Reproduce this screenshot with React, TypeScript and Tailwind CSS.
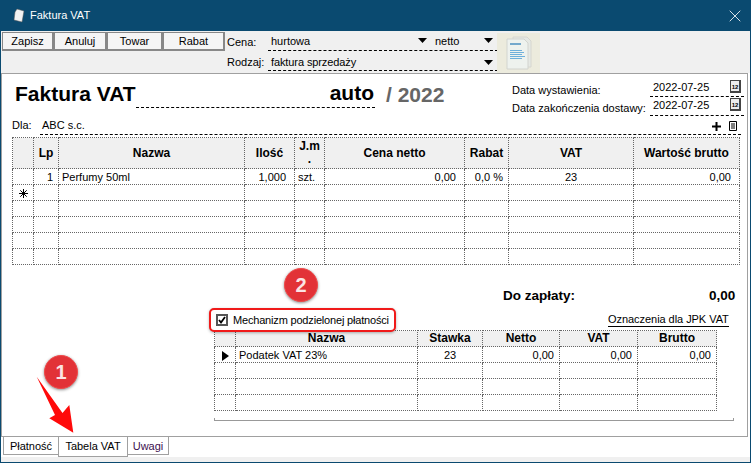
import React from 'react';
import { X } from 'lucide-react';

const headCell = 'border border-dotted border-[#666] bg-[#f0f0f0] p-0 text-center font-bold text-[12px] leading-[13px] text-black';
const bodyCell = 'h-[16px] border border-dotted border-[#666] px-[3px] py-0 text-[11px] leading-[14px] text-black whitespace-nowrap overflow-hidden';

const mainCols = [
  { label: '', w: 'w-[21px]' },
  { label: 'Lp', w: 'w-[25px]' },
  { label: 'Nazwa', w: 'w-[186px]' },
  { label: 'Ilość', w: 'w-[50px]' },
  { label: 'J.m', w: 'w-[30px]' },
  { label: 'Cena netto', w: 'w-[140px]' },
  { label: 'Rabat', w: 'w-[44px]' },
  { label: 'VAT', w: 'w-[125px]' },
  { label: 'Wartość brutto', w: 'w-[106px]' },
];

const vatCols = [
  { label: '', w: 'w-[21px]' },
  { label: 'Nazwa', w: 'w-[182px]' },
  { label: 'Stawka', w: 'w-[65px]' },
  { label: 'Netto', w: 'w-[77px]' },
  { label: 'VAT', w: 'w-[78px]' },
  { label: 'Brutto', w: 'w-[79px]' },
];

const CalendarIcon = () => (
  <div className="flex h-[13px] w-[11px] items-end justify-center border border-[#444] border-r-2 border-b-2 bg-[#eee]">
    <span className="text-[6px] font-bold leading-[8px] text-black">12</span>
  </div>
);

const Arrow = () => (
  <svg viewBox="0 0 10 5" preserveAspectRatio="none" className="h-[5px] w-[9px] shrink-0">
    <path d="M0 0H10L5 5Z" fill="#000" />
  </svg>
);

const ToolButton = ({ label, w }: { label: string; w: string }) => (
  <button className={`${w} h-[19px] border border-r-2 border-b-2 border-[#888] bg-[#f5f5f5] text-[11px] leading-[14px] text-black`}>
    {label}
  </button>
);

const Badge = ({ n, pos }: { n: string; pos: string }) => (
  <div className={`absolute ${pos} flex h-[34px] w-[34px] items-center justify-center rounded-full border border-[#f04a4a] bg-[#e23237] text-[20px] font-bold text-[#fbe4e4] shadow-[0_1px_3px_rgba(0,0,0,0.45)]`}>
    {n}
  </div>
);

export default function App() {
  return (
    <div className="relative flex h-[463px] w-[751px] flex-col overflow-hidden border-b border-[#0a4a70] bg-[#0a4a70] px-[1px] font-['Liberation_Sans',sans-serif]">
      {/* title bar */}
      <div className="flex h-[31px] shrink-0 items-center pl-[11px] pr-[5px] text-white">
        <svg width="14" height="16" viewBox="0 0 14 16">
          <path d="M5 1L12 3L10 14L2 12L3 4Z" fill="#f2f2f2" stroke="#555" strokeWidth="0.5" />
        </svg>
        <span className="ml-[4px] text-[11px]">Faktura VAT</span>
        <X className="ml-auto h-[20px] w-[20px]" strokeWidth={1} />
      </div>

      {/* toolbar */}
      <div className="flex h-[42px] shrink-0 bg-[#f0f0f0] text-[11px] leading-[14px] text-black">
        <div className="flex h-[20px] pl-[1px] pt-[1px]">
          <ToolButton label="Zapisz" w="w-[52px]" />
          <ToolButton label="Anuluj" w="w-[53px]" />
          <ToolButton label="Towar" w="w-[56px]" />
          <ToolButton label="Rabat" w="w-[62px]" />
        </div>
        <div className="ml-[2px] flex w-[274px] flex-col">
          <div className="flex h-[20px] items-center">
            <span className="w-[41px] pt-[1px]">Cena:</span>
            <div className="flex h-[20px] w-[230px] items-center border-b border-dashed border-black pl-[3px]">
              <span className="w-[147px]">hurtowa</span>
              <Arrow />
              <span className="ml-[8px] w-[49px]">netto</span>
              <Arrow />
            </div>
          </div>
          <div className="flex h-[20px] items-center">
            <span className="w-[41px] pt-[2px]">Rodzaj:</span>
            <div className="flex h-[20px] w-[230px] items-center justify-between border-b border-dashed border-black pl-[3px] pr-[5px] pt-[3px]">
              <span className="tracking-[-0.1px]">faktura sprzedaży</span>
              <Arrow />
            </div>
          </div>
        </div>
        <div className="ml-[-4px] flex h-[40px] w-[43px] items-center justify-center self-end bg-[#ecebdd]">
          <svg width="28" height="34" viewBox="0 0 28 34">
            <path d="M8 1H22L26 5V31H8Z" fill="#e6e9e4" stroke="#d6d6d0" />
            <path d="M2 3H19L23 7V33H2Z" fill="#eef2ee" stroke="#d2d4cf" />
            <rect x="5" y="7" width="11" height="2" fill="#74a9cc" />
            <rect x="5" y="14" width="12" height="1" fill="#6fb0db" />
            <rect x="5" y="16" width="14" height="1" fill="#6fb0db" />
            <rect x="5" y="18" width="12" height="1" fill="#6fb0db" />
            <rect x="5" y="20" width="15" height="1" fill="#6fb0db" />
            <rect x="5" y="22" width="12" height="1" fill="#6fb0db" />
          </svg>
        </div>
      </div>

      {/* document panel */}
      <div className="flex h-[364px] shrink-0 flex-col bg-white pr-[2px]">
        <div className="flex h-full flex-col border border-[#a0a0a0] bg-white">
          {/* heading */}
          <div className="flex h-[44px] shrink-0 pl-[13px] pr-[3px]">
            <div className="flex h-[34px] w-[360px] items-end text-[21px] font-bold leading-[24px] text-black">
              <span className="pb-[2px]">Faktura VAT</span>
              <span className="flex-1 border-b border-dashed border-black pb-[2px] pr-[1px] text-right">auto</span>
            </div>
            <span className="ml-[11px] pt-[9px] text-[21px] font-bold leading-[24px] text-[#666]">/ 2022</span>
            <div className="ml-auto flex flex-col pt-[5px] text-[11px] leading-[14px] text-black">
              <div className="flex h-[18px]">
                <span className="w-[138px] whitespace-nowrap pt-[4px]">Data wystawienia:</span>
                <div className="flex w-[94px] items-start justify-between border-b border-dashed border-black pl-[3px] pr-[3px] pt-[1px]">
                  <span>2022-07-25</span>
                  <CalendarIcon />
                </div>
              </div>
              <div className="flex h-[19px]">
                <span className="w-[138px] whitespace-nowrap pt-[4px]">Data zakończenia dostawy:</span>
                <div className="flex w-[94px] items-start justify-between border-b border-dashed border-black pl-[3px] pr-[3px] pt-[1px]">
                  <span>2022-07-25</span>
                  <CalendarIcon />
                </div>
              </div>
            </div>
          </div>

          {/* contractor */}
          <div className="flex h-[17px] shrink-0 items-end pl-[10px] pr-[6px] text-[11px] leading-[14px] text-black">
            <span className="w-[28px] pb-[3px]">Dla:</span>
            <div className="flex h-[17px] flex-1 items-end justify-between border-b border-dashed border-black pl-[2px] pb-[2px]">
              <span>ABC s.c.</span>
              <span className="flex items-center gap-[8px] pr-[4px] pb-[1px]">
                <svg width="9" height="9" viewBox="0 0 9 9"><path d="M3.5 0H5.5V3.5H9V5.5H5.5V9H3.5V5.5H0V3.5H3.5Z" fill="#000" /></svg>
                <svg width="8" height="10" viewBox="0 0 8 10"><path d="M.5.5H7.5V9.5H.5ZM2 3H6M2 5H6M2 7H6" fill="none" stroke="#000" /></svg>
              </span>
            </div>
          </div>

          {/* positions */}
          <table className="ml-[10px] mt-[2px] w-[727px] shrink-0 table-fixed border-collapse">
            <thead>
              <tr className="h-[31px]">
                {mainCols.map((col) => (
                  <th key={col.w + col.label} className={`${col.w} ${headCell}`}>
                    {col.label === 'J.m' ? <>J.m<br />.</> : col.label}
                  </th>
                ))}
              </tr>
            </thead>
            <tbody>
              <tr>
                <td className={bodyCell}></td>
                <td className={`${bodyCell} pr-[5px] text-right`}>1</td>
                <td className={bodyCell}>Perfumy 50ml</td>
                <td className={`${bodyCell} pr-[8px] text-right`}>1,000</td>
                <td className={bodyCell}>szt.</td>
                <td className={`${bodyCell} pr-[8px] text-right`}>0,00</td>
                <td className={`${bodyCell} pr-[5px] text-right`}>0,0 %</td>
                <td className={`${bodyCell} text-center`}>23</td>
                <td className={`${bodyCell} pr-[8px] text-right`}>0,00</td>
              </tr>
              {[0, 1, 2, 3, 4].map((row) => (
                <tr key={row}>
                  {mainCols.map((col, i) => (
                    <td key={i} className={`${bodyCell} text-center`}>
                      {row === 0 && i === 0 ? (
                        <svg width="9" height="9" viewBox="0 0 9 9" className="inline-block align-middle">
                          <path d="M4.5 0V9M0 4.5H9M1.3 1.3L7.7 7.7M7.7 1.3L1.3 7.7" fill="none" stroke="#000" />
                        </svg>
                      ) : null}
                    </td>
                  ))}
                </tr>
              ))}
            </tbody>
          </table>

          {/* total */}
          <div className="mt-[21px] flex h-[20px] shrink-0 items-center pl-[501px] text-[13.5px] font-bold text-black">
            <span>Do zapłaty:</span>
            <span className="ml-[134px]">0,00</span>
          </div>

          {/* split payment */}
          <div className="mt-[2px] flex h-[24px] shrink-0 items-center pl-[207px]">
            <div className="relative z-10 flex h-[24px] w-[187px] items-center rounded-[5px] border-2 border-[#f01a1a] bg-white pl-[5px] shadow-[0_1px_3px_rgba(0,0,0,0.3)]">
              <div className="flex h-[12px] w-[12px] items-center justify-center border-2 border-[#555] bg-white">
                <svg width="8" height="8" viewBox="0 0 8 8"><path d="M1 4L3 6.5L7 1" fill="none" stroke="#000" strokeWidth="1.8" /></svg>
              </div>
              <span className="ml-[5px] whitespace-nowrap text-[11px] leading-[14px] tracking-[-0.18px] text-black">Mechanizm podzielonej płatności</span>
            </div>
            <span className="ml-[212px] border-b border-black text-[11px] leading-[13px] tracking-[-0.05px] text-black">Oznaczenia dla JPK VAT</span>
          </div>

          {/* VAT table with its bracket line */}
          <div className="ml-[212px] mt-[-2px] w-[520px] shrink-0">
            <table className="w-[502px] table-fixed border-collapse">
              <thead>
                <tr className="h-[16px]">
                  {vatCols.map((col) => (
                    <th key={col.w + col.label} className={`${col.w} ${headCell}`}>{col.label}</th>
                  ))}
                </tr>
              </thead>
              <tbody>
                <tr>
                  <td className={`${bodyCell} text-center`}>
                    <svg width="7" height="10" viewBox="0 0 7 10" className="inline-block"><path d="M0 0L7 5L0 10Z" fill="#000" /></svg>
                  </td>
                  <td className={bodyCell}>Podatek VAT 23%</td>
                  <td className={`${bodyCell} text-center`}>23</td>
                  <td className={`${bodyCell} pr-[5px] text-right`}>0,00</td>
                  <td className={`${bodyCell} pr-[5px] text-right`}>0,00</td>
                  <td className={`${bodyCell} pr-[5px] text-right`}>0,00</td>
                </tr>
                {[0, 1, 2].map((row) => (
                  <tr key={row}>
                    {vatCols.map((col, i) => <td key={i} className={bodyCell}></td>)}
                  </tr>
                ))}
              </tbody>
            </table>
            <div className="mt-[7px] h-[3px] border-x border-b border-[#999]"></div>
          </div>
        </div>
      </div>

      {/* tabs */}
      <div className="flex h-[20px] shrink-0 items-start bg-white pl-[2px] text-[11px] leading-[14px]">
        <div className="flex h-[18px] w-[55px] items-center justify-center border-b border-l border-[#a0a0a0] text-black">Płatność</div>
        <div className="flex h-[20px] w-[70px] items-center justify-center border-x border-b border-[#a0a0a0] pb-[2px] text-black">Tabela VAT</div>
        <div className="flex h-[18px] w-[41px] items-center justify-center border-b border-r border-[#a0a0a0] text-[#3b0f4f]">Uwagi</div>
      </div>
      <div className="flex-1 bg-[#f0f0f0]"></div>

      {/* annotations */}
      <Badge n="2" pos="left-[284px] top-[268px]" />
      <Badge n="1" pos="left-[44px] top-[355px]" />
      <svg width="50" height="70" viewBox="0 0 50 70" className="absolute left-[30px] top-[370px]">
        <path d="M6.7 6.7L32.5 43L39.3 35L43.3 62.7L19.3 48.3L25 45Z" fill="#ff0a0a" />
      </svg>
    </div>
  );
}
